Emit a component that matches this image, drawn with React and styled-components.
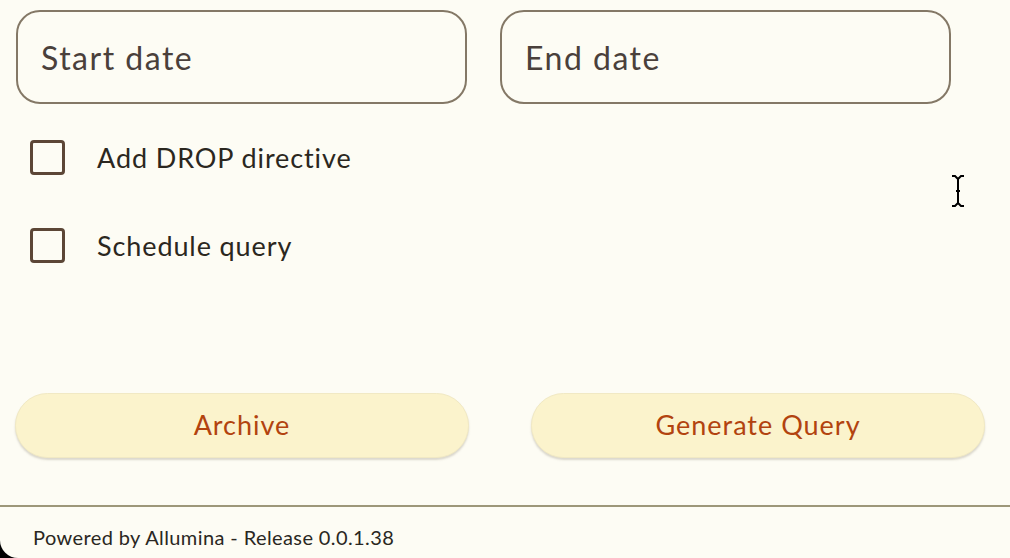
import styled, { createGlobalStyle } from "styled-components";

const GlobalStyle = createGlobalStyle`
  html, body {
    margin: 0;
    padding: 0;
    background: #000;
  }
  * {
    box-sizing: border-box;
  }
`;

const Page = styled.div`
  position: relative;
  width: 1010px;
  height: 558px;
  background: #fdfcf4;
  border-bottom-left-radius: 18px;
  font-family: Lato, "Noto Sans", sans-serif;
  display: flex;
  flex-direction: column;
  overflow: hidden;
`;

const Form = styled.div`
  flex: 1;
  padding: 10px 0 0 15px;
  display: flex;
  flex-direction: column;
`;

const DateRow = styled.div`
  display: flex;
  gap: 33px;
  padding-left: 1px;
`;

const DateField = styled.div`
  width: 451px;
  height: 94px;
  border: 2px solid #847866;
  border-radius: 24px;
  display: flex;
  align-items: center;
  padding-left: ${(p) => p.$indent}px;
  font-size: 32px;
  color: #4a403b;
  letter-spacing: 1.5px;
`;

const Options = styled.div`
  display: flex;
  flex-direction: column;
  gap: 53px;
  margin-top: 36px;
  padding-left: 15px;
`;

const OptionRow = styled.label`
  display: flex;
  align-items: center;
  gap: 32px;
  height: 35px;
  font-size: 27px;
  color: #2b2720;
  letter-spacing: 0.9px;
`;

const Box = styled.span`
  width: 35px;
  height: 35px;
  border: 3px solid #5c4636;
  border-radius: 4px;
`;

const Actions = styled.div`
  display: flex;
  gap: 62px;
  margin-top: 130px;
`;

const ActionButton = styled.button`
  width: 454px;
  height: 65px;
  border: 1px solid #f1e9c4;
  border-radius: 33px;
  background: #fbf3cc;
  box-shadow: 0 2px 2px rgba(120, 110, 90, 0.25);
  color: #b2430f;
  font-family: inherit;
  font-size: 27px;
  letter-spacing: 1px;
  padding: 0 0 2px;
`;

const Footer = styled.footer`
  border-top: 2px solid #9d9779;
  height: 53px;
  display: flex;
  align-items: center;
  padding: 9px 0 0 33px;
  font-size: 20px;
  color: #2a2722;
  letter-spacing: 0.4px;
`;

const Cursor = styled.svg`
  position: absolute;
  left: 951px;
  top: 174px;
`;

export default function App() {
  return (
    <>
      <GlobalStyle />
      <Page>
        <Form>
          <DateRow>
            <DateField $indent={23}>Start date</DateField>
            <DateField $indent={23}>End date</DateField>
          </DateRow>
          <Options>
            <OptionRow>
              <Box />
              Add DROP directive
            </OptionRow>
            <OptionRow>
              <Box />
              Schedule query
            </OptionRow>
          </Options>
          <Actions>
            <ActionButton>Archive</ActionButton>
            <ActionButton>Generate Query</ActionButton>
          </Actions>
        </Form>
        <Footer>Powered by Allumina - Release 0.0.1.38</Footer>
        <Cursor width="14" height="34" viewBox="0 0 14 34">
          <path
            d="M1 2 L4 2 L7 5 L10 2 L13 2 M7 5 L7 29 M1 32 L4 32 L7 29 L10 32 L13 32 M5 17 L9 17"
            fill="none"
            stroke="#000"
            strokeWidth="2"
          />
        </Cursor>
      </Page>
    </>
  );
}
